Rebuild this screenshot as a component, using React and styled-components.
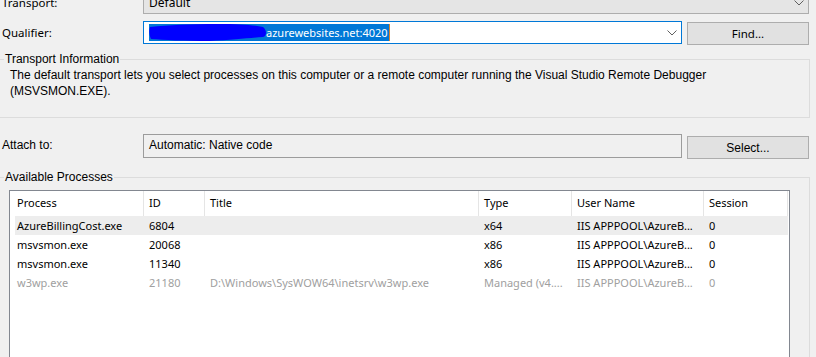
import React from 'react';
import styled, { createGlobalStyle } from 'styled-components';

const GlobalStyle = createGlobalStyle`
  html, body {
    margin: 0;
    padding: 0;
    background: #f0f0f0;
  }
  body {
    font-family: "Noto Sans", "Segoe UI", sans-serif;
    font-size: 11px;
    color: #000;
    overflow: hidden;
  }
`;

const columns = [
  { key: 'process', label: 'Process', width: 134 },
  { key: 'id', label: 'ID', width: 61 },
  { key: 'title', label: 'Title', width: 274 },
  { key: 'type', label: 'Type', width: 93 },
  { key: 'user', label: 'User Name', width: 132 },
  { key: 'session', label: 'Session', width: 84 },
];

const processes = [
  { process: 'AzureBillingCost.exe', id: '6804', title: '', type: 'x64', user: 'IIS APPPOOL\\AzureB...', session: '0', selected: true },
  { process: 'msvsmon.exe', id: '20068', title: '', type: 'x86', user: 'IIS APPPOOL\\AzureB...', session: '0' },
  { process: 'msvsmon.exe', id: '11340', title: '', type: 'x86', user: 'IIS APPPOOL\\AzureB...', session: '0' },
  { process: 'w3wp.exe', id: '21180', title: 'D:\\Windows\\SysWOW64\\inetsrv\\w3wp.exe', type: 'Managed (v4....', user: 'IIS APPPOOL\\AzureB...', session: '0', disabled: true },
];

function Chevron() {
  return (
    <svg width="10" height="6" viewBox="0 0 10 6">
      <path d="M0.5 0.5 L5 5 L9.5 0.5" fill="none" stroke="#606060" strokeWidth="1" />
    </svg>
  );
}

function Scribble() {
  return (
    <svg width="117" height="17" viewBox="0 0 117 17">
      <path
        d="M1 3 C20 1 40 0 70 0 C90 0 105 1 114 3 C118 6 118 12 114 13 C100 14 85 16 60 17 C35 17 15 16 2 15 C0 11 0 6 1 3 Z"
        fill="#0000ff"
      />
    </svg>
  );
}

function App() {
  return (
    <Window>
      <GlobalStyle />
      <Content>
        <FieldRow>
          <Label>Transport:</Label>
          <Combo wide>
            <ComboText>Default</ComboText>
            <Chevron />
          </Combo>
        </FieldRow>

        <FieldRow gap={7}>
          <Label>Qualifier:</Label>
          <Combo editable>
            <Selection>
              <Scribble />
              <SelectedText>azurewebsites.net:4020</SelectedText>
            </Selection>
            <Chevron />
          </Combo>
          <Button offset={1}>Find...</Button>
        </FieldRow>

        <Group gap={6}>
          <Legend>Transport Information</Legend>
          <Description>
            The default transport lets you select processes on this computer or a remote computer running the Visual Studio Remote Debugger
            <br />
            (MSVSMON.EXE).
          </Description>
        </Group>

        <FieldRow gap={16}>
          <Label narrow>Attach to:</Label>
          <ReadOnlyField>Automatic: Native code</ReadOnlyField>
          <Button offset={2} narrow>Select...</Button>
        </FieldRow>

        <Group gap={10} open>
          <Legend>Available Processes</Legend>
          <ListView>
            <HeaderRow>
              {columns.map((c, i) => (
                <HeaderCell key={c.key} first={i === 0} style={{ width: c.width }}>
                  {c.label}
                </HeaderCell>
              ))}
            </HeaderRow>
            {processes.map((p, r) => (
              <DataRow key={r} selected={p.selected} disabled={p.disabled}>
                {columns.map((c, i) => (
                  <DataCell key={c.key} first={i === 0} style={{ width: i === 0 ? c.width - 5 : c.width }}>
                    {p[c.key]}
                  </DataCell>
                ))}
              </DataRow>
            ))}
          </ListView>
        </Group>
      </Content>
    </Window>
  );
}

export default App;

const Window = styled.div`
  width: 816px;
  height: 357px;
  overflow: hidden;
  background: #f0f0f0;
`;

const Content = styled.div`
  display: flex;
  flex-direction: column;
  margin-top: -9px;
`;

const FieldRow = styled.div`
  display: grid;
  grid-template-columns: 143px 539px 127px;
  align-items: start;
  margin-top: ${props => props.gap || 0}px;
`;

const Label = styled.div`
  padding-left: 2px;
  height: 23px;
  line-height: 23px;
  font-family: ${props => props.narrow ? '"Liberation Sans", Arial, sans-serif' : '"Noto Sans", sans-serif'};
  font-size: ${props => props.narrow ? '12px' : '11.5px'};
  color: #000;
  white-space: nowrap;
`;

const Combo = styled.div`
  grid-column: ${props => props.wide ? '2 / 4' : 'auto'};
  box-sizing: border-box;
  height: 23px;
  display: flex;
  align-items: center;
  justify-content: space-between;
  padding: 0 4px 0 5px;
  background: ${props => props.editable ? '#ffffff' : '#e5e5e5'};
  border: 1px solid ${props => props.editable ? '#0078d7' : '#adadad'};
`;

const ComboText = styled.span`
  font-size: 12px;
`;

const Selection = styled.span`
  display: inline-flex;
  align-items: center;
  height: 17px;
  background: #0078d7;
  border-right: 1px solid #d9822b;
`;

const SelectedText = styled.span`
  color: #fff;
  font-size: 11px;
  line-height: 17px;
  padding-right: 1px;
`;

const Button = styled.button`
  justify-self: end;
  box-sizing: border-box;
  width: 122px;
  height: 23px;
  margin: ${props => props.offset || 0}px 0 0;
  padding: 0;
  background: #e1e1e1;
  border: 1px solid #adadad;
  color: #000;
  font-family: ${props => props.narrow ? '"Liberation Sans", Arial, sans-serif' : '"Noto Sans", sans-serif'};
  font-size: ${props => props.narrow ? '12px' : '11.5px'};
  text-align: center;
`;

const ReadOnlyField = styled.div`
  box-sizing: border-box;
  height: 24px;
  padding-left: 5px;
  line-height: 21px;
  background: #f0f0f0;
  border: 1px solid #9c9c9c;
  font-family: "Liberation Sans", Arial, sans-serif;
  font-size: 12px;
`;

const Group = styled.fieldset`
  margin: ${props => props.gap}px 6px 0 -1px;
  padding: 0 0 ${props => props.open ? 0 : 18}px 4px;
  border: 1px solid #dcdcdc;
  min-width: 0;
`;

const Legend = styled.legend`
  padding: 0 1px;
  margin-left: 0;
  height: 16px;
  line-height: 16px;
  font-family: "Liberation Sans", Arial, sans-serif;
  font-size: 12px;
  color: #000;
`;

const Description = styled.p`
  margin: 0 0 0 6px;
  line-height: 16px;
  font-family: "Liberation Sans", Arial, sans-serif;
  font-size: 12px;
  color: #000;
`;

const ListView = styled.div`
  box-sizing: border-box;
  width: 781px;
  height: 220px;
  margin: 5px 0 0 5px;
  background: #fff;
  border: 1px solid #828790;
`;

const HeaderRow = styled.div`
  display: flex;
  height: 25px;
`;

const HeaderCell = styled.div`
  box-sizing: border-box;
  flex: none;
  padding-left: ${props => props.first ? 7 : 5}px;
  line-height: 24px;
  border-right: 1px solid #e5e5e5;
  white-space: nowrap;
  overflow: hidden;
`;

const DataRow = styled.div`
  display: flex;
  height: 19px;
  margin-left: 5px;
  width: 773px;
  background: ${props => props.selected ? '#ededed' : 'transparent'};
  color: ${props => props.disabled ? '#a0a0a0' : '#000'};
`;

const DataCell = styled.div`
  box-sizing: border-box;
  flex: none;
  padding-left: ${props => props.first ? 2 : 5}px;
  line-height: 19px;
  white-space: nowrap;
  overflow: hidden;
`;
